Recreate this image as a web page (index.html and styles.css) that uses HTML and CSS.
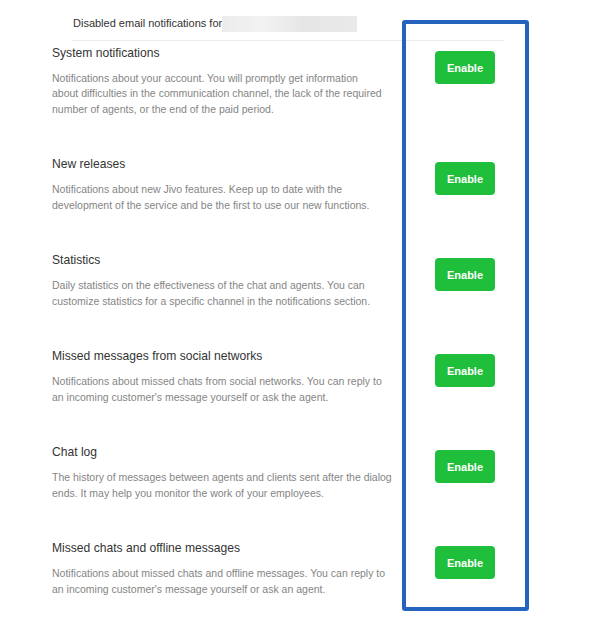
FILE: index.html
```html
<!DOCTYPE html>
<html>
<head>
<meta charset="utf-8">
<link rel="stylesheet" href="styles.css">
</head>
<body>
<div class="page">
  <div class="header">
    <span class="header-text">Disabled email notifications for</span><span class="redacted"></span>
  </div>
  <div class="list">
    <div class="item">
      <div class="text">
        <div class="title">System notifications</div>
        <div class="desc">Notifications about your account. You will promptly get information<br>about difficulties in the communication channel, the lack of the required<br>number of agents, or the end of the paid period.</div>
      </div>
      <button class="btn">Enable</button>
    </div>
    <div class="item">
      <div class="text">
        <div class="title">New releases</div>
        <div class="desc">Notifications about new Jivo features. Keep up to date with the<br>development of the service and be the first to use our new functions.</div>
      </div>
      <button class="btn">Enable</button>
    </div>
    <div class="item">
      <div class="text">
        <div class="title">Statistics</div>
        <div class="desc">Daily statistics on the effectiveness of the chat and agents. You can<br>customize statistics for a specific channel in the notifications section.</div>
      </div>
      <button class="btn">Enable</button>
    </div>
    <div class="item">
      <div class="text">
        <div class="title">Missed messages from social networks</div>
        <div class="desc">Notifications about missed chats from social networks. You can reply to<br>an incoming customer's message yourself or ask the agent.</div>
      </div>
      <button class="btn">Enable</button>
    </div>
    <div class="item">
      <div class="text">
        <div class="title">Chat log</div>
        <div class="desc">The history of messages between agents and clients sent after the dialog<br>ends. It may help you monitor the work of your employees.</div>
      </div>
      <button class="btn">Enable</button>
    </div>
    <div class="item">
      <div class="text">
        <div class="title">Missed chats and offline messages</div>
        <div class="desc">Notifications about missed chats and offline messages. You can reply to<br>an incoming customer's message yourself or ask an agent.</div>
      </div>
      <button class="btn">Enable</button>
    </div>
  </div>
  <div class="highlight"></div>
</div>
</body>
</html>
```
FILE: styles.css
```css
* { box-sizing: border-box; }
html, body { margin: 0; padding: 0; background: #fff; }
body { font-family: "Liberation Sans", Arial, sans-serif; }
.page { position: relative; width: 616px; height: 630px; padding-top: 14px; }
.header {
  margin-left: 72px;
  width: 432px;
  height: 27px;
  padding-left: 1px;
  border-bottom: 1px solid #ebebeb;
  display: flex;
  align-items: flex-start;
}
.header-text { font-size: 11px; line-height: 17px; color: #333; padding-top: 1px; }
.redacted {
  display: inline-block;
  width: 135px;
  height: 16px;
  margin-top: 2px;
  background: linear-gradient(90deg, #ececec 0%, #f2f2f2 30%, #e6e6e6 60%, #e9e9e9 100%);
}
.list { padding-left: 52px; padding-top: 3px; }
.item { display: flex; align-items: flex-start; padding-bottom: 38.4px; }
.text { width: 383px; }
.title { font-size: 12.1px; line-height: 18px; color: #333; }
.desc { margin-top: 9px; font-size: 10.5px; line-height: 15.3px; color: #858585; white-space: nowrap; }
.btn {
  margin-top: 7px;
  width: 60px;
  height: 33px;
  border: none;
  border-radius: 4px;
  background: #1fbf3c;
  color: #fff;
  font-family: "Liberation Sans", Arial, sans-serif;
  font-weight: bold;
  font-size: 11px;
  padding: 0;
}
.highlight {
  position: absolute;
  left: 402px;
  top: 20px;
  width: 127px;
  height: 591px;
  border: 4px solid #2463be;
  border-radius: 3px;
}
```
